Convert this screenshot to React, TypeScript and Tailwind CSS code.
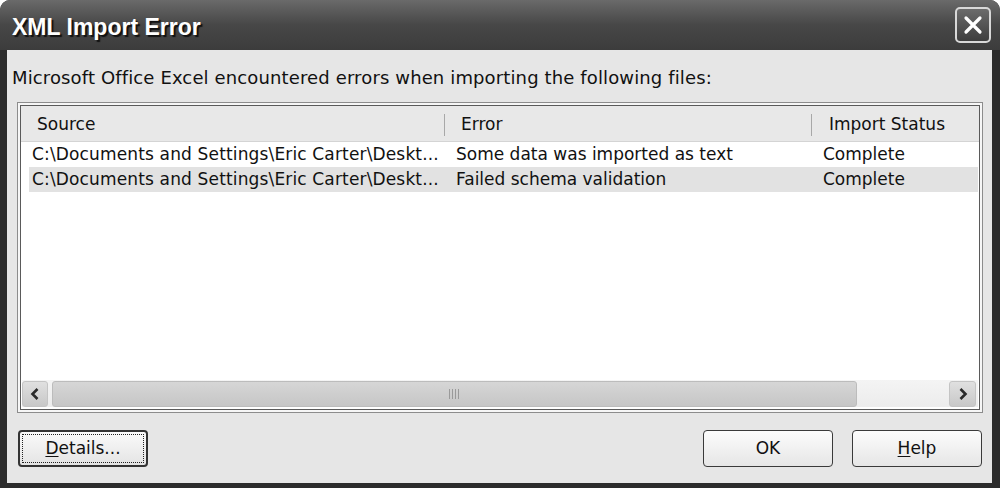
import React from "react";

const font = { fontFamily: '"DejaVu Sans", Verdana, sans-serif' };

function Chevron({ dir }: { dir: "left" | "right" }) {
    return (
        <svg width="12" height="14" viewBox="0 0 12 14">
            {dir === "left" ? (
                <path d="M8.5 2 L3.5 7 L8.5 12" fill="none" stroke="#2a2a2a" strokeWidth="2.6" />
            ) : (
                <path d="M3.5 2 L8.5 7 L3.5 12" fill="none" stroke="#2a2a2a" strokeWidth="2.6" />
            )}
        </svg>
    );
}

function Btn({ children, primary }: { children: React.ReactNode; primary?: boolean }) {
    if (primary) {
        return (
            <div className="w-[130px] h-[37px] rounded-[4px] border-2 border-[#333] bg-gradient-to-b from-[#fafafa] to-[#e4e4e4] p-[2px]">
                <div className="w-full h-full border border-dotted border-[#222] flex items-center justify-center text-[17px] text-[#111]">
                    {children}
                </div>
            </div>
        );
    }
    return (
        <div className="w-[130px] h-[37px] rounded-[4px] border border-[#3a3a3a] bg-gradient-to-b from-[#fcfcfc] to-[#e6e6e6] flex items-center justify-center text-[17px] text-[#111]">
            {children}
        </div>
    );
}

export default function App() {
    const rows = [
        { src: "C:\\Documents and Settings\\Eric Carter\\Deskt...", err: "Some data was imported as text", status: "Complete", bg: "bg-white" },
        { src: "C:\\Documents and Settings\\Eric Carter\\Deskt...", err: "Failed schema validation", status: "Complete", bg: "bg-[#e2e2e2]" },
    ];

    return (
        <div className="w-[1000px] h-[488px] bg-[#2c2c2c] rounded-t-[10px] flex flex-col overflow-hidden" style={font}>
            {/* title bar */}
            <div className="h-[50px] shrink-0 flex items-center justify-between pl-[12px] pr-[9px] bg-gradient-to-b from-[#6a6a6a] via-[#474747] to-[#3c3c3c]">
                <span
                    className="text-white font-bold text-[23px] pt-[5px] [text-shadow:2px_2px_1px_#111]"
                    style={{ fontFamily: '"Liberation Sans", Arial, sans-serif' }}
                >
                    XML Import Error
                </span>
                <div className="w-[36px] h-[36px] rounded-[5px] border-2 border-[#d8d8d8] bg-gradient-to-b from-[#6c6c6c] to-[#3e3e3e] flex items-center justify-center">
                    <svg width="20" height="20" viewBox="0 0 20 20">
                        <path d="M3 3 L17 17 M17 3 L3 17" stroke="white" strokeWidth="3.2" strokeLinecap="round" />
                    </svg>
                </div>
            </div>

            {/* body */}
            <div className="flex-1 ml-[7px] mr-[8px] mb-[5px] bg-[#e6e6e6] flex flex-col">
                <p className="pl-[5px] pt-[18px] h-[52px] text-[18px] tracking-[0.13px] text-[#111] leading-[20px] whitespace-nowrap">
                    Microsoft Office Excel encountered errors when importing the following files:
                </p>

                {/* list */}
                <div className="ml-[10px] w-[966px] h-[311px] border border-[#8c8c8c] bg-[#f6f6f6] p-[2px]">
                    <div className="w-full h-full border border-[#5a5a5a] bg-white flex flex-col">
                        <div className="h-[36px] shrink-0 flex items-center pt-[2px] bg-[#e8e8e8] border-b border-[#d4d4d4] text-[17px] text-[#111]">
                            <div className="w-[423px] pl-[16px]">Source</div>
                            <div className="w-[1px] h-[22px] bg-[#a8a8a8]" />
                            <div className="w-[366px] pl-[16px]">Error</div>
                            <div className="w-[1px] h-[22px] bg-[#a8a8a8]" />
                            <div className="flex-1 pl-[17px] whitespace-nowrap">Import Status</div>
                        </div>
                        <div className="flex flex-col pl-[8px] pr-[1px]">
                            {rows.map((r, i) => (
                                <div key={i} className={`h-[25px] flex items-center pt-[1px] text-[17px] text-[#111] ${r.bg}`}>
                                    <div className="w-[416px] pl-[3px] whitespace-nowrap tracking-[0.15px]">{r.src}</div>
                                    <div className="w-[366px] pl-[11px] whitespace-nowrap">{r.err}</div>
                                    <div className="flex-1 pl-[12px]">{r.status}</div>
                                </div>
                            ))}
                        </div>
                        <div className="flex-1" />
                        {/* horizontal scrollbar */}
                        <div className="h-[27px] shrink-0 mb-[2px] mx-[1px] flex items-center bg-gradient-to-b from-[#f4f4f4] to-[#ececec]">
                            <div className="w-[26px] h-[26px] rounded-[3px] border border-[#c4c4c4] bg-gradient-to-b from-[#e0e0e0] to-[#c8c8c8] flex items-center justify-center">
                                <Chevron dir="left" />
                            </div>
                            <div className="ml-[4px] w-[805px] h-[26px] rounded-[3px] border border-[#bcbcbc] bg-gradient-to-b from-[#d6d6d6] to-[#c6c6c6] flex items-center justify-center">
                                <svg width="14" height="10" viewBox="0 0 14 10">
                                    <path d="M1.5 0 V10 M4.5 0 V10 M7.5 0 V10 M10.5 0 V10" stroke="#9a9a9a" strokeWidth="1" />
                                </svg>
                            </div>
                            <div className="flex-1" />
                            <div className="w-[27px] h-[26px] mr-[2px] rounded-[3px] border border-[#c4c4c4] bg-gradient-to-b from-[#e0e0e0] to-[#c8c8c8] flex items-center justify-center">
                                <Chevron dir="right" />
                            </div>
                        </div>
                    </div>
                </div>

                {/* buttons */}
                <div className="mt-[17px] pl-[11px] pr-[10px] flex items-center">
                    <Btn primary>
                        <span><span className="underline underline-offset-2">D</span>etails...</span>
                    </Btn>
                    <div className="flex-1" />
                    <Btn>OK</Btn>
                    <div className="w-[19px]" />
                    <Btn>
                        <span><span className="underline underline-offset-2">H</span>elp</span>
                    </Btn>
                </div>
            </div>
        </div>
    );
}
